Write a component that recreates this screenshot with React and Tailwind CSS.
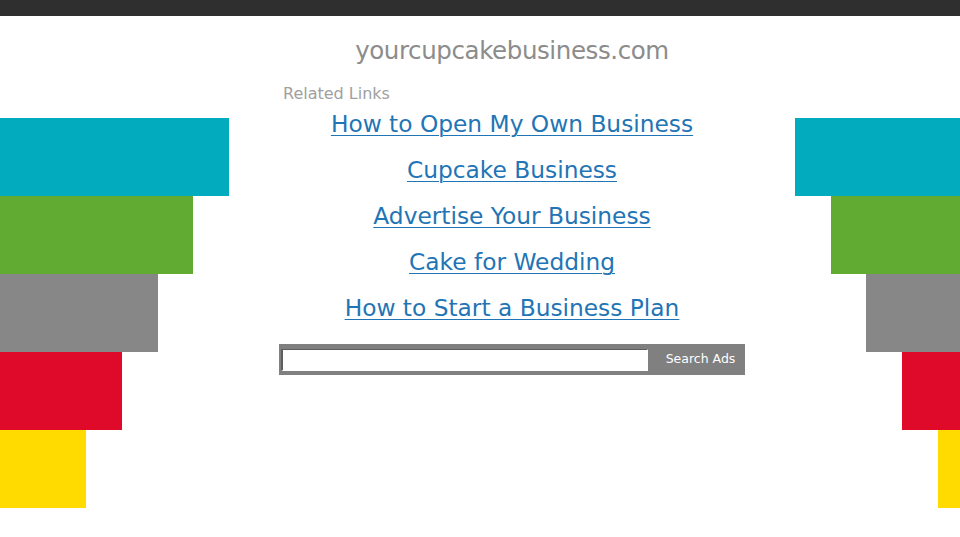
import React from "react";

const leftBars = [
  { w: "w-[229px]", c: "bg-[#03abbf]" },
  { w: "w-[193px]", c: "bg-[#61ab33]" },
  { w: "w-[158px]", c: "bg-[#878787]" },
  { w: "w-[122px]", c: "bg-[#df0a29]" },
  { w: "w-[86px]", c: "bg-[#ffdb00]" },
];

const rightBars = [
  { w: "w-[165px]", c: "bg-[#03abbf]" },
  { w: "w-[129px]", c: "bg-[#61ab33]" },
  { w: "w-[94px]", c: "bg-[#878787]" },
  { w: "w-[58px]", c: "bg-[#df0a29]" },
  { w: "w-[22px]", c: "bg-[#ffdb00]" },
];

const links = [
  "How to Open My Own Business",
  "Cupcake Business",
  "Advertise Your Business",
  "Cake for Wedding",
  "How to Start a Business Plan",
];

const App = () => {
  return (
    <div className="min-h-[537px] w-[960px] bg-white font-['DejaVu_Sans',sans-serif]">
      <div className="h-4 bg-[#2f2f2f]"></div>
      <div className="grid grid-cols-[229px_1fr_165px]">
        {/* left stripes */}
        <div className="flex flex-col items-start pt-[102px]">
          {leftBars.map((b, i) => (
            <div key={i} className={`h-[78px] ${b.w} ${b.c}`}></div>
          ))}
        </div>

        {/* center */}
        <div className="flex flex-col items-center pt-[19px]">
          <h1 className="text-[24.5px] leading-8 text-[#8c8c8c] tracking-[-0.4px]">
            yourcupcakebusiness.com
          </h1>
          <div className="w-[466px] mt-[15px]">
            <div className="pl-1 text-[16px] leading-6 text-[#a0a0a0]">Related Links</div>
            <ul className="flex flex-col items-center gap-[14px] mt-[2px]">
              {links.map((l) => (
                <li key={l}>
                  <a href="#" className="text-[23.3px] leading-8 text-[#1f75b5] underline underline-offset-[3px] decoration-1">
                    {l}
                  </a>
                </li>
              ))}
            </ul>
            <div className="mt-5 h-[31px] bg-[#808080] flex items-center pl-[2px]">
              <input
                type="text"
                className="w-[367px] h-[22px] bg-white border-t border-l-2 border-t-[#5e5e5e] border-l-[#5e5e5e] border-b border-r border-b-white border-r-white outline-none"
              />
              <button className="flex-1 text-[12.5px] text-white text-center pl-2">Search Ads</button>
            </div>
          </div>
        </div>

        {/* right stripes */}
        <div className="flex flex-col items-end pt-[102px]">
          {rightBars.map((b, i) => (
            <div key={i} className={`h-[78px] ${b.w} ${b.c}`}></div>
          ))}
        </div>
      </div>
    </div>
  );
};

export default App;
